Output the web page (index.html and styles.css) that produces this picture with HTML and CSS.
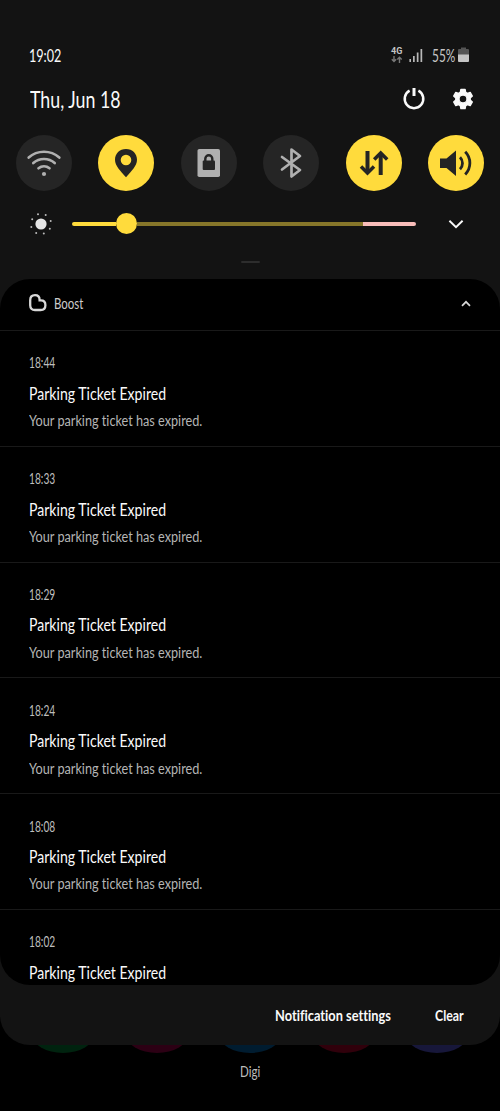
FILE: index.html
```html
<!DOCTYPE html>
<html lang="en">
<head>
<meta charset="utf-8">
<title>Notifications</title>
<link rel="stylesheet" href="styles.css">
</head>
<body>
<main class="screen">
  <section class="shade">
    <header class="status">
      <span class="t clock">19:02</span>
      <div class="status-icons">
        <div class="network"><span class="net-label">4G</span>
          <svg width="12" height="7" viewBox="0 0 12 7" fill="none" stroke="#777" stroke-width="1.4"><path d="M3 0v5.6M.8 3.3 3 5.6l2.200-2.300M8.500 7V1.200M6.300 3.500l2.200-2.300 2.200 2.300"/></svg>
        </div>
        <svg class="signal" width="14" height="15" viewBox="0 0 14 15" fill="#b8b8b8"><path d="M.4 11H2v3H.4zM4 8h1.700v6H4zM7.800 4.500h1.700V14H7.800zM11.500 1h1.700v13h-1.700z"/></svg>
        <span class="t battery-text">55%</span>
        <svg class="battery" width="11" height="16" viewBox="0 0 11 16"><path d="M3 .5h5V2h2a1 1 0 0 1 1 1v5H0V3a1 1 0 0 1 1-1h2z" fill="#555"/><path d="M0 7.500h11V14a1 1 0 0 1-1 1H1a1 1 0 0 1-1-1z" fill="#c4c4c4"/></svg>
      </div>
    </header>

    <div class="date-row">
      <span class="t date">Thu, Jun 18</span>
      <svg class="power" width="24" height="24" viewBox="0 0 24 24" fill="none" stroke="#fafafa"><path d="M7.600 3.700A9.300 9.300 0 1 0 16.400 3.700" stroke-width="2.500"/><path d="M12 1v8" stroke-width="3"/></svg>
      <svg class="gear" width="24" height="24" viewBox="0 0 24 24"><path fill="#fafafa" stroke="#fafafa" stroke-width="1.400" stroke-linejoin="round" fill-rule="evenodd" d="M9.900 2.500h4.200l.6 2.800 1.800 1 2.700-.9 2.100 3.600-2.100 1.900v2.200l2.100 1.900-2.100 3.600-2.700-.9-1.800 1-.6 2.800H9.900l-.6-2.800-1.800-1-2.700.9L2.700 15l2.100-1.900v-2.200L2.700 9l2.100-3.600 2.700.9 1.800-1zM12 8a4 4 0 1 0 0 8 4 4 0 0 0 0-8z"/></svg>
    </div>

    <div class="toggles">
      <div class="toggle"><svg width="36" height="36" viewBox="0 0 36 36" fill="none" stroke="#b0b0b0" stroke-width="2.700" stroke-linecap="round"><path d="M2.700 12.600a23 23 0 0 1 30.600 0M7.300 18.100a16 16 0 0 1 21.400 0M12.500 23.200a8.800 8.800 0 0 1 11 0"/><circle cx="18" cy="29" r="2.100" fill="#b0b0b0" stroke="none"/></svg></div>
      <div class="toggle on"><svg width="36" height="36" viewBox="0 0 36 36"><path fill="#242424" fill-rule="evenodd" d="M18 4C11.500 4 7 8.700 7 14.800 7 21 12.500 26 18 32.300 23.500 26 29 21 29 14.800 29 8.700 24.500 4 18 4zm0 5.700a5.300 5.300 0 1 0 0 10.600 5.300 5.300 0 0 0 0-10.600z"/></svg></div>
      <div class="toggle"><svg width="36" height="36" viewBox="0 0 36 36"><rect x="6.500" y="4" width="22.500" height="28" rx="1.800" fill="#b0b0b0"/><rect x="11.700" y="15.500" width="12.300" height="9.500" rx="1" fill="#252525"/><path d="M14.300 16v-2.200a3.500 3.500 0 0 1 7 0V16" fill="none" stroke="#252525" stroke-width="2.400"/></svg></div>
      <div class="toggle"><svg width="36" height="36" viewBox="0 0 36 36" fill="none" stroke="#b0b0b0" stroke-width="2.700" stroke-linejoin="round" stroke-linecap="round"><path d="M9 12 27 25l-8.500 6.500V4.500L27 11 9 24.500"/></svg></div>
      <div class="toggle on"><svg width="36" height="36" viewBox="0 0 36 36" fill="none" stroke="#242424" stroke-width="4"><path d="M11.500 6v21.500M24.700 30V9"/><path d="M5 21.500l6.500 6.500 6.500-6.500M18.200 14.500 24.700 8l6.500 6.500" stroke-width="3.500"/></svg></div>
      <div class="toggle on"><svg width="36" height="36" viewBox="0 0 36 36" fill="none" stroke="#242424" stroke-width="2.800"><path fill="#242424" stroke="none" d="M2 13.500h6.500L18 5.500v25.500l-9.500-8H2z"/><path d="M22 12.200a8.500 8.500 0 0 1 0 12M27.200 6.800a16 16 0 0 1 0 22.600"/></svg></div>
    </div>

    <div class="brightness">
      <svg width="24" height="24" viewBox="0 0 24 24" fill="#e6e6e6"><circle cx="12" cy="12" r="5.600"/><g fill="#bbb"><circle cx="9" cy="2.200" r="1"/><circle cx="16.700" cy="3.100" r="1"/><circle cx="21.700" cy="9" r="1"/><circle cx="20.800" cy="16.700" r="1"/><circle cx="14.800" cy="21.600" r="1"/><circle cx="7.200" cy="20.900" r="1"/><circle cx="2.300" cy="14.900" r="1"/><circle cx="3.200" cy="7.200" r="1"/></g></svg>
      <div class="slider"><div class="filled"></div><div class="knob"></div><div class="rest"></div><div class="high"></div></div>
      <svg class="expand" width="16" height="12" viewBox="0 0 16 12" fill="none" stroke="#fafafa" stroke-width="1.900"><path d="M1.400 2.700 8 9.200l6.600-6.500"/></svg>
    </div>
    <div class="handle"></div>

    <div class="panel">
      <div class="app">
        <svg width="18" height="18" viewBox="0 0 18 18" fill="none" stroke="#d8d8d8" stroke-width="2.300"><path d="M1.200 6.200C1.200 3.100 3.200 1.200 6 1.200S10.600 3.100 10.600 6V6.400H12C14.800 6.400 16.400 8.400 16.400 11.200 16.400 14.300 14.400 16 11.600 16H6C2.800 16 1.200 14.100 1.200 11.200z"/></svg>
        <span class="t app-name">Boost</span>
        <svg class="collapse" width="10" height="7" viewBox="0 0 10 7" fill="none" stroke="#d8d8d8" stroke-width="1.700"><path d="M1 5.800 5 1.800l4 4"/></svg>
      </div>
      <article class="note"><span class="t time">18:44</span><span class="t title">Parking Ticket Expired</span><span class="t body">Your parking ticket has expired.</span></article>
      <article class="note"><span class="t time">18:33</span><span class="t title">Parking Ticket Expired</span><span class="t body">Your parking ticket has expired.</span></article>
      <article class="note"><span class="t time">18:29</span><span class="t title">Parking Ticket Expired</span><span class="t body">Your parking ticket has expired.</span></article>
      <article class="note"><span class="t time">18:24</span><span class="t title">Parking Ticket Expired</span><span class="t body">Your parking ticket has expired.</span></article>
      <article class="note"><span class="t time">18:08</span><span class="t title">Parking Ticket Expired</span><span class="t body">Your parking ticket has expired.</span></article>
      <article class="note"><span class="t time">18:02</span><span class="t title">Parking Ticket Expired</span></article>
    </div>
    <footer class="actions"><span class="t settings">Notification settings</span><span class="t clear">Clear</span></footer>
  </section>
  <div class="dock"><i class="green"></i><i class="pink"></i><i class="blue"></i><i class="red"></i><i class="violet"></i></div>
  <div class="carrier"><span class="t">Digi</span></div>
</main>
</body>
</html>
```
FILE: styles.css
```css
* { box-sizing: border-box; }
body { margin: 0; background: #000; font-family: Lato, "Open Sans", sans-serif; color: #fafafa; font-variant-ligatures: none; }
svg { display: block; flex: none; }
.screen { width: 500px; height: 1111px; overflow: hidden; background: #000; }
.shade { position: relative; z-index: 1; height: 1045px; background: #131313; border-radius: 0 0 30px 30px; padding-top: 42px; overflow: hidden; }
.t { display: block; white-space: nowrap; transform-origin: left center; flex: none; }

.status { display: flex; justify-content: space-between; height: 26px; align-items: center; padding: 0 31px 0 29px; }
.clock { font-size: 18px; transform: scaleX(.7); }
.status-icons { display: flex; align-items: center; height: 26px; }
.network { width: 12px; margin-right: 6px; }
.net-label { display: block; font: bold 9px/9px Roboto, sans-serif; color: #c4c4c4; }
.signal { margin-right: 9px; }
.battery-text { font-size: 18px; width: 24px; color: #c4c4c4; transform: scaleX(.66); }
.battery { margin-left: 2px; }

.date-row { display: flex; align-items: center; height: 62px; padding: 0 25px 0 30px; }
.date { font-size: 22.5px; transform: scaleX(.79); margin-right: auto; }
.power { margin-right: 25px; }

.toggles { display: flex; justify-content: space-between; padding: 0 16px; margin-top: 5px; }
.toggle { width: 56px; height: 56px; border-radius: 50%; background: #252525; display: grid; place-items: center; }
.toggle.on { background: #ffdb3c; }

.brightness { display: flex; align-items: center; height: 24px; margin: 21px 36px 0 29px; }
.slider { display: flex; align-items: center; width: 344px; height: 21px; margin: -1px 0 0 19px; }
.filled { width: 44px; height: 4px; background: #ffdb3c; border-radius: 2px 0 0 2px; }
.knob { width: 21px; height: 21px; border-radius: 50%; background: #ffdb3c; }
.rest { width: 226px; height: 4px; background: #86762a; }
.high { flex: 1; height: 4px; background: #f9bdba; border-radius: 0 2px 2px 0; }
.expand { margin-left: auto; }
.handle { width: 19px; height: 2px; border-radius: 1px; background: #2d2d2d; margin: 25px auto 16px; }

.panel { height: 706px; border-radius: 30px; background: #000; overflow: hidden; }
.app { display: flex; align-items: center; height: 51px; padding: 0 29px 3px; }
.app-name { font-size: 15px; color: #ccc; margin-left: 7px; transform: scaleX(.76); }
.collapse { margin-left: auto; }
.note { height: 115.8px; border-top: 1px solid #191919; padding: 21.4px 29px 0; }
.time { font-size: 15px; line-height: 20px; color: #bdbdbd; transform: scaleX(.68); }
.title { font-size: 17.5px; line-height: 24px; margin-top: 9.4px; transform: scaleX(.805); }
.body { font-size: 15.5px; line-height: 22px; margin-top: 3.4px; color: #b5b5b5; transform: scaleX(.818); }

.actions { display: flex; height: 60px; align-items: center; padding: 0 0 1px 275px; }
.actions .t { font-size: 16px; font-weight: bold; }
.settings { width: 160px; transform: scaleX(.8); }
.clear { transform: scaleX(.77); }

.dock { display: flex; justify-content: space-between; height: 60px; padding: 0 32px; margin-top: -52px; }
.dock i { width: 62px; height: 60px; border-radius: 31px / 19px; }
.green { background: #00230f; }
.pink { background: #2c0014; }
.blue { background: #001c30; }
.red { background: #30000b; }
.violet { background: #17173a; }
.carrier { height: 36px; padding-left: 240px; font-size: 15px; line-height: 36px; color: #bdbdbd; }
.carrier .t { transform: scaleX(.77); }
```
